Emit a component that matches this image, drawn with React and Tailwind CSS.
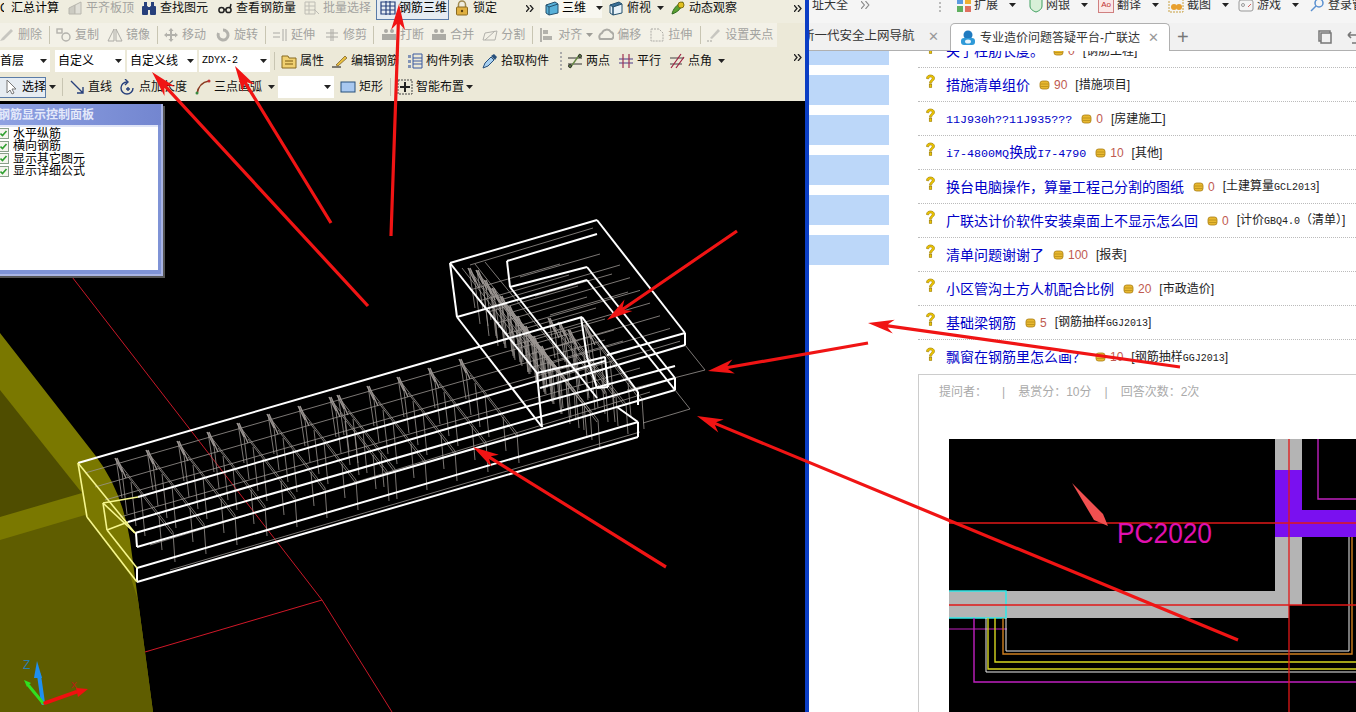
import React from 'react'

const Ic = ({ children, className = '' }) => (
  <svg viewBox="0 0 16 16" className={`w-4 h-4 shrink-0 ${className}`}>{children}</svg>
)
const Caret = ({ className = '' }) => (
  <svg viewBox="0 0 7 4" className={`w-[7px] h-[4px] shrink-0 ${className}`}><path d="M0 0h7L3.5 4z" fill="#222" /></svg>
)
const More = ({ className = '' }) => (
  <svg viewBox="0 0 8 7" className={`w-2 h-[7px] shrink-0 ${className}`}>
    <path d="M0 0l3 3.5L0 7M4 0l3 3.5L4 7" fill="none" stroke="#222" strokeWidth="1.3" />
  </svg>
)
const Sep = ({ className = '' }) => <span className={`w-px h-[18px] bg-[#c8c5b2] shrink-0 ${className}`} />

const Tool = ({ icon, label, off, className = '' }) => (
  <div className={`flex items-center gap-[3px] shrink-0 ${off ? 'text-[#a3a3a0]' : 'text-[#111]'} ${className}`}>
    <Ic className={off ? 'opacity-40' : ''}>{icon}</Ic>
    <span>{label}</span>
  </div>
)

const Combo = ({ label, className = '', mono }) => (
  <div className={`flex items-center justify-between bg-white h-[22px] pl-[3px] pr-[3px] shrink-0 ${className}`}>
    <span className={mono ? "font-['Liberation_Mono',monospace] text-[10px]" : ''}>{label}</span>
    <Caret />
  </div>
)

// toolbar glyphs
const g = {
  sum: <g fill="#999" stroke="#666"><path d="M2 14V8l6-3v9z" /><path d="M8 14V5l6-3v12z" fill="#ccc" /></g>,
  binoc: <g fill="#27407c"><rect x="1" y="6" width="6" height="9" rx="1" /><rect x="9" y="6" width="6" height="9" rx="1" /><rect x="3" y="2" width="3" height="5" /><rect x="10" y="2" width="3" height="5" /><rect x="6" y="7" width="4" height="3" /></g>,
  glasses: <g fill="none" stroke="#222" strokeWidth="1.5"><circle cx="4.5" cy="10" r="2.6" /><circle cx="11.5" cy="10" r="2.6" /><path d="M7 9.5h2M13 8l1-4" /></g>,
  batch: <g fill="none" stroke="#777"><path d="M1 2h10v12H1zM1 6h10M1 10h10M5 2v12" /><path d="M10 9l5 5" /></g>,
  rebar3d: <g fill="none" stroke="#27407c" strokeWidth="1.2"><path d="M1 2h14v12H1zM1 6h14M1 10h14M6 1v14M10 1v14" /></g>,
  lock: <g><path d="M4.5 7V4.5a3.5 3.5 0 017 0V7" fill="none" stroke="#a08a50" strokeWidth="1.5" /><rect x="2.5" y="7" width="11" height="8" rx="1" fill="#e0b040" stroke="#8a6a20" /><circle cx="8" cy="11" r="1.2" fill="#5a4010" /></g>,
  cube: <g stroke="#24506e"><path d="M2 5l9-3 3 2v9l-9 2-3-2z" fill="#58b0d8" /><path d="M2 5l3 2 9-3M5 7v8" fill="none" /></g>,
  cube2: <g stroke="#24506e"><path d="M2 5l9-3 3 2-9 3z" fill="#3a7098" /><path d="M2 5l3 2v8l-3-2zM5 7l9-3v9l-9 2z" fill="#e8f2f8" /></g>,
  orbit: <g><path d="M2 14c1-5 5-10 11-12-1 6-5 10-11 12z" fill="#5aa030" stroke="#2f6a20" /><circle cx="11" cy="5" r="3" fill="#e0c020" stroke="#807010" /></g>,
  brush: <path d="M1 14l4-1 9-9-2-2-9 9z" fill="#888" />,
  copy: <g fill="none" stroke="#555" strokeWidth="1.4"><rect x="1" y="2" width="5" height="4" /><circle cx="10" cy="10" r="4" /></g>,
  mirror: <g fill="none" stroke="#444"><path d="M7 2L1 14h6zM9 2l6 12H9z" /></g>,
  move: <path d="M8 1l2.500 3H9v3h3V5.500l3 2.500-3 2.500V9H9v3h1.500L8 15l-2.500-3H7V9H4v1.500L1 8l3-2.500V7h3V4H5.500z" fill="#555" />,
  rotate: <path d="M8 3a5 5 0 11-4.500 3" fill="none" stroke="#555" strokeWidth="3" />,
  extend: <g stroke="#444" fill="none"><path d="M1 6h7M1 10h7M11 2v12M14 2v12" /></g>,
  trim: <g stroke="#444" fill="none"><path d="M2 6h12M2 10h12M7 2v12M9 2v12" /></g>,
  brk: <g fill="#444"><rect x="1" y="7" width="14" height="6" /><circle cx="5" cy="4" r="2" /><circle cx="11" cy="4" r="2" /></g>,
  split: <g stroke="#555" fill="none"><path d="M1 13h12L15 4 3 6z" /><path d="M3 13l10-9" /></g>,
  align: <g fill="#555"><rect x="1" y="1" width="2" height="14" /><rect x="4" y="3" width="5" height="4" /><rect x="4" y="9" width="9" height="4" /></g>,
  offset: <path d="M2 12a4 4 0 012-6 5 5 0 019-1 4 4 0 011 7z" fill="none" stroke="#444" strokeWidth="2" />,
  stretch: <g stroke="#444" fill="none" strokeDasharray="2 1"><path d="M2 2h8l4 4v8H2z" /></g>,
  grip: <g><path d="M1 14h6" stroke="#333" strokeDasharray="2 1" /><path d="M4 11l8-9 2 2-8 8z" fill="#888" /></g>,
  props: <g><path d="M1 3h6l1 2h7v10H1z" fill="#f0d070" stroke="#886a20" /><path d="M4 11h8M4 8h8" stroke="#7a5a10" /></g>,
  edit: <g><path d="M0 14h9" stroke="#111" /><path d="M4 12L13 3l2 2-9 8z" fill="#e8c040" stroke="#604010" strokeWidth=".6" /></g>,
  list: <g fill="#3a5aa0"><path d="M1 2h3v3H1zM1 7h3v3H1zM1 12h3v3H1z" opacity=".6" /><path d="M6 1h9v14H6z" fill="none" stroke="#3a5aa0" /><path d="M6 5h9M6 8h9M6 11h9" stroke="#3a5aa0" /></g>,
  pick: <g><path d="M1 15l2-5 6-6 3 3-6 6z" fill="#a8d0f0" stroke="#27507c" /><path d="M9 3l3-2 3 3-2 3z" fill="#27507c" /></g>,
  twoPt: <g stroke="#333"><path d="M1 5h14M1 11h14" /><path d="M3 15L13 1" stroke="#684" strokeWidth="1.4" /><circle cx="13" cy="3" r="1.500" fill="#684" /><circle cx="3" cy="13" r="1.500" fill="#684" /></g>,
  parallel: <g stroke="#4a3a88" strokeWidth="1.2"><path d="M1 6h14M1 10h14" /><path d="M5 1v14M11 1v14" stroke="#a03050" /></g>,
  angle: <g stroke="#a02040" strokeWidth="1.2"><path d="M1 5h14M1 11h12" stroke="#444" /><path d="M2 15L12 1M7 15L15 4" /></g>,
  cursor: <path d="M4 1v13l3-3 2 4 2-1-2-4h4z" fill="#fff" stroke="#777" />,
  line: <g stroke="#27407c" strokeWidth="1.4"><path d="M2 2l12 12M14 8v6H8" fill="none" /></g>,
  lengthen: <g fill="none" stroke="#27407c" strokeWidth="1.4"><path d="M7 3a6 6 0 106 6" /><path d="M5 0l3 3-3 3" /><path d="M8 8v4M6 10h4" /></g>,
  arc: <g><path d="M2 15C3 8 7 3 14 2" fill="none" stroke="#8a3a20" strokeWidth="1.6" /><circle cx="2" cy="14" r="1.500" fill="#3a8a40" /><circle cx="14" cy="2" r="1.500" fill="#c03030" /></g>,
  rect: <rect x="1" y="3" width="14" height="10" fill="#a8c8f0" stroke="#27507c" />,
  smart: <g fill="#222"><path d="M1 1h14v14H1z" fill="none" stroke="#444" strokeDasharray="2 1" /><path d="M7 3h2v10H7zM3 7h10v2H3z" /></g>,
}

const mono12 = "font-['Liberation_Mono',monospace] text-[11.7px]"
const mono10 = "font-['Liberation_Mono',monospace] text-[10px]"

const rows = [
  ['关于柱筋长度。', '0', '[钢筋工程]'],
  ['措施清单组价', '90', '[措施项目]'],
  [<span className={mono12}>11J930h??11J935???</span>, '0', '[房建施工]'],
  [<><span className={mono12}>i7-4800MQ</span>换成<span className={mono12}>I7-4790</span></>, '10', '[其他]'],
  ['换台电脑操作，算量工程己分割的图纸', '0', <>[土建算量<span className={mono10}>GCL2013</span>]</>],
  ['广联达计价软件安装桌面上不显示怎么回', '0', <>[计价<span className={mono10}>GBQ4.0</span>（清单）]</>],
  ['清单问题谢谢了', '100', '[报表]'],
  ['小区管沟土方人机配合比例', '20', '[市政造价]'],
  ['基础梁钢筋', '5', <>[钢筋抽样<span className={mono10}>GGJ2013</span>]</>],
  ['飘窗在钢筋里怎么画？', '10', <>[钢筋抽样<span className={mono10}>GGJ2013</span>]</>],
]

const Question = () => (
  <svg viewBox="0 0 11 15" className="w-[11px] h-[15px] shrink-0 -mt-[6px]">
    <path d="M1.500 4.500C1.500 2 3.500 1 5.500 1s4 1.200 4 3.300c0 2.400-3 2.700-3 5H4.500c0-3.200 2.700-3.300 2.700-5 0-.9-.7-1.300-1.700-1.300S3.800 3.600 3.700 4.800z" fill="#f0c800" stroke="#a08000" strokeWidth=".7" />
    <rect x="4.300" y="10.500" width="2.400" height="2.800" fill="#f0c800" stroke="#a08000" strokeWidth=".7" />
  </svg>
)
const Coin = () => (
  <svg viewBox="0 0 11 10" className="w-[11px] h-[10px] shrink-0 ml-[9px]">
    <rect x="1" y="1" width="9" height="8" rx="2.500" fill="#e8b830" stroke="#a87c10" strokeWidth=".8" />
    <path d="M1.500 4h8M1.500 6.500h8" stroke="#b08818" strokeWidth=".7" />
  </svg>
)

// wireframe geometry, in page coordinates
const white = [
  [138, 497, 460, 404], [460, 404, 605, 361], [137, 547, 675, 390], [135, 533, 675, 378], [128, 522, 460, 425], [460, 425, 675, 366],
  [137, 568, 638, 422], [137, 582, 638, 437], [136, 533, 137, 547], [137, 568, 137, 582], [638, 422, 638, 437], [617, 407, 638, 422],
  [78, 463, 582, 317], [582, 317, 638, 392], [638, 392, 638, 405], [450, 263, 597, 220], [597, 220, 685, 333], [685, 333, 685, 345],
  [450, 263, 457, 317], [457, 317, 587, 280], [507, 261, 597, 234], [507, 261, 510, 287], [510, 287, 587, 267], [587, 267, 675, 378],
  [587, 280, 675, 390], [675, 378, 675, 390], [450, 263, 537, 373], [537, 373, 542, 427], [457, 317, 542, 427], [537, 373, 605, 357], [605, 357, 608, 387],
  [685, 345, 540, 388], [685, 333, 607, 355], [510, 287, 597, 398], [597, 388, 608, 387], [581, 317, 587, 357], [587, 357, 597, 388],
]
const pale = [
  [78, 463, 135, 533], [78, 463, 87, 517], [87, 517, 137, 582], [103, 503, 107, 530], [107, 530, 137, 568], [103, 503, 135, 533], [107, 530, 128, 522], [103, 503, 138, 497],
]
const stirrupTips = [[115, 458], [146, 450], [177, 441], [207, 432], [237, 423], [267, 414], [298, 406], [329, 397], [337, 395], [367, 386], [397, 377], [428, 368], [459, 359]]
const slabTips = [[468, 268], [476, 270], [484, 280], [492, 288], [500, 296], [508, 306], [516, 316], [524, 326], [532, 336], [540, 346], [548, 318], [558, 322], [568, 330], [584, 325]]

const Stirrup = ({ x, y }) => (
  <g>
    <path d={`M${x} ${y}l7 14M${x + 2} ${y}l9 20`} strokeWidth="1.300" />
    <path d={`M${x} ${y}l58 74M${x + 11} ${y + 16}l46 60M${x + 1} ${y}l6 40M${x + 7} ${y + 14}l5 42M${x + 16} ${y + 24}l5 44M${x + 26} ${y + 36}l4 42M${x + 44} ${y + 58}l3 34M${x + 58} ${y + 74}l2 30`} />
  </g>
)

const Wireframe = () => (
  <svg viewBox="0 101 805 611" className="w-full h-full block">
    <path d="M0 333L95 455Q122 490 130 540L138 600L153 712H0z" fill="#7a7800" />
    <path d="M0 540L85 515L130 575L138 600L153 712H0z" fill="#5f5d00" />
    <path d="M0 390L82 493L0 517z" fill="#4f4d00" />
    <path d="M69 273L322 600L392 712" fill="none" stroke="#c81828" />
    <path d="M145 652L322 600" fill="none" stroke="#d01828" />

    <g stroke="#9b9592" strokeWidth=".8" fill="none">
      {stirrupTips.map(([x, y]) => <Stirrup key={x} x={x} y={y} />)}
      {slabTips.map(([x, y]) => <Stirrup key={x} x={x} y={y} />)}
      <path d="M85 473L582 330M95 487L605 340M105 500L620 352M120 517L640 368M150 545L650 392M170 570L640 432" />
      {[0, 1, 2, 3, 4, 5, 6].map((t) => (
        <path key={t} d={`M${500 + t * 10} ${300 + t * 12.7}l120 -35`} />
      ))}
      {[0, 1, 2, 3, 4, 5, 6, 7].map((t) => (
        <path key={t} d={`M${470 + t * 9} ${290 + t * 11}l90 -26`} />
      ))}
      <path d="M470 265L593 228M520 277L600 254M535 296L612 274M550 315L628 292" />
      <path d="M685 345L705 370L627 390M675 390L690 409L643 423" />
      <path d="M462 268L548 378M475 264L560 372M485 262L575 372" />
    </g>

    <g stroke="#fff" strokeWidth="2" fill="none">
      {white.map(([a, b, c, d], i) => <line key={i} x1={a} y1={b} x2={c} y2={d} />)}
    </g>
    <g stroke="#f6f68c" strokeWidth="1.600" fill="none">
      {pale.map(([a, b, c, d], i) => <line key={i} x1={a} y1={b} x2={c} y2={d} />)}
    </g>

    <g strokeLinecap="round">
      <path d="M43 703L39 675" stroke="#1f8ff0" strokeWidth="4" />
      <path d="M37 661l5 17h-8z" fill="#1f8ff0" />
      <path d="M43 703L29 686" stroke="#30e020" strokeWidth="3" />
      <path d="M24 680l7 3-4 4z" fill="#30e020" />
      <path d="M45 703L76 692" stroke="#f01010" strokeWidth="3.500" />
      <path d="M88 689l-10 8-2-9z" fill="#f01010" />
    </g>
    <text x="23" y="669" fontSize="12" fill="#2a7fb0" fontFamily="Liberation Sans">Z</text>
    <text x="71" y="688" fontSize="9" fill="#c01818" fontFamily="Liberation Sans">X</text>
  </svg>
)

const DrawingPhoto = () => (
  <svg viewBox="949 439 407 273" className="w-[407px] h-[273px] ml-[30px] block bg-black shrink-0">
    <path d="M1275 439h27v166h-27zM949 591h340v27H949z" fill="#b4b4b4" />
    <path d="M1275 470h27v40h54v27h-81z" fill="#7a10f0" />
    <g fill="none">
      <path d="M949 591h57v27h-57" stroke="#30e8e8" strokeWidth="1.500" />
      <path d="M949 629h58" stroke="#c020c0" />
      <path d="M974 618v64h382" stroke="#c020c0" strokeWidth="1.400" />
      <path d="M986 618v54h370" stroke="#eee" />
      <path d="M988 618v51h368" stroke="#d8d820" strokeWidth="1.400" />
      <path d="M995 618v44h361" stroke="#d8d820" strokeWidth="1.400" />
      <path d="M1003 618v36h349v-117" stroke="#d08020" strokeWidth="1.400" />
      <path d="M1006 618v33h343v-114" stroke="#eee" />
      <path d="M1318 439v60h38" stroke="#c020c0" strokeWidth="1.400" />
      <path d="M949 523h407M949 605h407M1289 439v273" stroke="#e01818" strokeWidth="1.300" />
    </g>
    <path d="M1072 483l31 31 5 12-14-6z" fill="#f05050" />
    <text x="1117" y="543" fontSize="29" fill="#e010b0" fontFamily="Liberation Sans" textLength="95" lengthAdjust="spacingAndGlyphs">PC2020</text>
  </svg>
)

const head = (x1, y1, x2, y2, w = 3.200, len = 26, hw = 7) => {
  const a = Math.atan2(y2 - y1, x2 - x1)
  const c = Math.cos(a), s = Math.sin(a)
  const p = (d, n) => `${(x2 - c * d - s * n).toFixed(1)},${(y2 - s * d + c * n).toFixed(1)}`
  return `${(x1 - s * w / 2).toFixed(1)},${(y1 + c * w / 2).toFixed(1)} ${p(len - 6, w / 2)} ${p(len, hw)} ${x2},${y2} ${p(len, -hw)} ${p(len - 6, -w / 2)} ${(x1 + s * w / 2).toFixed(1)},${(y1 - c * w / 2).toFixed(1)}`
}

const arrows = [
  [368, 306, 152, 72], [331, 223, 235, 66], [391, 236, 399, 4], [737, 231, 607, 320],
  [868, 343, 708, 371], [1180, 367, 868, 323], [1238, 640, 697, 416], [666, 567, 473, 447],
]

export default function App() {
  return (
    <div className="relative flex w-[1356px] h-[712px] overflow-hidden bg-white text-[12px] leading-none whitespace-nowrap font-['Liberation_Sans','Noto_Sans_CJK_SC',sans-serif]">

      {/* CAD window */}
      <div className="w-[805px] h-full flex flex-col bg-[#ece9d8] shrink-0 overflow-hidden">
        <div className="h-[23px] flex items-center pb-[7px] shrink-0 bg-[#efeddf]">
          <span className="w-[4px] overflow-hidden shrink-0">C</span>
          <span className="ml-[7px] shrink-0">汇总计算</span>
          <Tool off icon={g.sum} label="平齐板顶" className="ml-[8px]" />
          <Tool icon={g.binoc} label="查找图元" className="ml-[7px]" />
          <Tool icon={g.glasses} label="查看钢筋量" className="ml-[9px]" />
          <Tool off icon={g.batch} label="批量选择" className="ml-[8px]" />
          <div className="ml-[5px] w-[73px] h-[24px] flex items-center gap-[3px] pl-[3px] border border-[#5a7ca8] bg-[#e6ecf2] shrink-0">
            <Ic>{g.rebar3d}</Ic><span>钢筋三维</span>
          </div>
          <Tool icon={g.lock} label="锁定" className="ml-[5px]" />
          <More className="ml-[29px]" />
          <div className="ml-[6px] w-[62px] h-[20px] flex items-center gap-[2px] pl-[4px] bg-[#f8f7f0] shrink-0">
            <Ic>{g.cube}</Ic><span className="shrink-0">三维</span><Caret className="ml-[8px]" />
          </div>
          <Tool icon={g.cube2} label="俯视" className="ml-[6px]" />
          <Caret className="ml-[6px]" />
          <Tool icon={g.orbit} label="动态观察" className="ml-[6px]" />
          <More className="ml-auto mr-[3px]" />
        </div>

        <div className="h-[26px] flex items-center pb-[2px] shrink-0">
          <div className="h-[24px] w-[777px] flex items-center bg-[#f3f1e7] shrink-0">
            <Tool off icon={g.brush} label="删除" className="-ml-[1px]" />
            <Sep className="ml-[7px]" />
            <Tool off icon={g.copy} label="复制" className="ml-[6px]" />
            <Tool off icon={g.mirror} label="镜像" className="ml-[8px]" />
            <Sep className="ml-[7px]" />
            <Tool off icon={g.move} label="移动" className="ml-[5px]" />
            <Tool off icon={g.rotate} label="旋转" className="ml-[9px]" />
            <Sep className="ml-[7px]" />
            <Tool off icon={g.extend} label="延伸" className="ml-[6px]" />
            <Tool off icon={g.trim} label="修剪" className="ml-[9px]" />
            <Sep className="ml-[6px]" />
            <Tool off icon={g.brk} label="打断" className="ml-[7px]" />
            <Tool off icon={g.brk} label="合并" className="ml-[7px]" />
            <Tool off icon={g.split} label="分割" className="ml-[8px]" />
            <Sep className="ml-[7px]" />
            <Tool off icon={g.align} label="对齐" className="ml-[6px]" />
            <Caret className="ml-[4px] opacity-40" />
            <Tool off icon={g.offset} label="偏移" className="ml-[5px]" />
            <Tool off icon={g.stretch} label="拉伸" className="ml-[8px]" />
            <Sep className="ml-[8px]" />
            <Tool off icon={g.grip} label="设置夹点" className="ml-[5px]" />
          </div>
        </div>

        <div className="h-[26px] flex items-center pb-[2px] shrink-0">
          <Combo label="首层" className="w-[50px] !pl-0" />
          <Combo label="自定义" className="w-[70px] ml-[5px]" />
          <Combo label="自定义线" className="w-[70px] ml-[2px]" />
          <Combo label="ZDYX-2" mono className="w-[71px] ml-[2px]" />
          <Sep className="ml-[4px]" />
          <Tool icon={g.props} label="属性" className="ml-[6px]" />
          <Tool icon={g.edit} label="编辑钢筋" className="ml-[8px]" />
          <Tool icon={g.list} label="构件列表" className="ml-[8px]" />
          <Tool icon={g.pick} label="拾取构件" className="ml-[8px]" />
          <span className="ml-[11px] w-[2px] h-[18px] shrink-0 border-l-2 border-dotted border-[#aaa]" />
          <Tool icon={g.twoPt} label="两点" className="ml-[5px]" />
          <Tool icon={g.parallel} label="平行" className="ml-[8px]" />
          <Tool icon={g.angle} label="点角" className="ml-[8px]" />
          <Caret className="ml-[6px]" />
          <More className="ml-auto mr-[3px] -mt-[8px]" />
        </div>

        <div className="h-[26px] flex items-center pb-[2px] shrink-0">
          <div className="-ml-[1px] w-[47px] h-[21px] flex items-center gap-[3px] pl-[3px] border border-[#5a7ca8] bg-[#e6ecf2] shrink-0">
            <Ic>{g.cursor}</Ic><span className="shrink-0">选择</span>
          </div>
          <Caret className="ml-[3px]" />
          <Sep className="ml-[6px]" />
          <Tool icon={g.line} label="直线" className="ml-[6px]" />
          <Tool icon={g.lengthen} label="点加长度" className="ml-[8px]" />
          <Tool icon={g.arc} label="三点画弧" className="ml-[8px]" />
          <Caret className="ml-[6px]" />
          <div className="ml-[3px] w-[56px] h-[22px] bg-white flex items-center justify-end pr-[3px] shrink-0"><Caret /></div>
          <Tool icon={g.rect} label="矩形" className="ml-[6px]" />
          <Sep className="ml-[7px]" />
          <Tool icon={g.smart} label="智能布置" className="ml-[6px]" />
          <Caret className="ml-[2px]" />
        </div>

        <div className="relative flex-1 bg-black min-h-0">
          <Wireframe />
          <div className="absolute -left-[3px] top-[3px] w-[166px] h-[172px] flex flex-col bg-[#7f93d6] border-r-2 border-b-2 border-[#a9b4e4] shadow-[2px_2px_0_#555]">
            <div className="h-[21px] flex items-center px-[1px] bg-gradient-to-r from-[#8fa2e2] to-[#7386d0] text-[#e4e9fa] font-bold shrink-0">钢筋显示控制面板</div>
            <div className="flex-1 mr-[3px] mb-[4px] bg-white border-t-2 border-[#dfe4f6] flex flex-col gap-px pt-[1px] pl-[1px]">
              {['水平纵筋', '横向钢筋', '显示其它图元', '显示详细公式'].map((t) => (
                <div key={t} className="h-[11.500px] flex items-center gap-[4px]">
                  <svg viewBox="0 0 11 11" className="w-[11px] h-[11px] shrink-0">
                    <rect x=".5" y=".5" width="10" height="10" fill="#f4f4ee" stroke="#8aa08a" />
                    <path d="M2.500 5.500l2 2 4-4.500" fill="none" stroke="#2fa030" strokeWidth="1.600" />
                  </svg>
                  <span className="text-black">{t}</span>
                </div>
              ))}
            </div>
          </div>
        </div>
      </div>

      <div className="w-[4px] h-full bg-[#0b3ec4] shrink-0" />

      {/* browser window */}
      <div className="flex-1 min-w-0 h-full flex flex-col text-[#333]">
        <div className="h-[23px] flex items-center pb-[13px] bg-[#f5f5f5] shrink-0 overflow-hidden">
          <span className="ml-[3px] shrink-0">址大全</span>
          <svg viewBox="0 0 8 7" className="w-[9px] h-[8px] ml-[13px] shrink-0"><path d="M0 0l3 3.500L0 7M4 0l3 3.500L4 7" fill="none" stroke="#888" /></svg>
          <span className="ml-[69px] w-[3px] h-[14px] shrink-0 border-l-2 border-dotted border-[#bbb]" />
          <Ic className="ml-[14px]"><g><rect x="1" y="1" width="6" height="6" fill="#5a9ae0" /><rect x="9" y="1" width="6" height="6" fill="#f0b030" /><rect x="1" y="9" width="6" height="6" fill="#60b060" /><rect x="9" y="9" width="6" height="6" fill="#e07060" /></g></Ic>
          <span className="ml-[2px] shrink-0">扩展</span>
          <Caret className="ml-[11px]" />
          <Ic className="ml-[12px]"><path d="M2 2l6-1 6 1v7c0 3-3 5-6 6-3-1-6-3-6-6z" fill="#d8f0d8" stroke="#40a060" /></Ic>
          <span className="ml-[2px] shrink-0">网银</span>
          <Caret className="ml-[11px]" />
          <div className="ml-[10px] w-4 h-4 border border-[#d08080] bg-[#fbe8e8] text-[8px] text-[#c03030] flex items-center justify-center shrink-0">Ao</div>
          <span className="ml-[3px] shrink-0">翻译</span>
          <Caret className="ml-[11px]" />
          <Ic className="ml-[9px]"><g fill="#e8a030"><rect x="1" y="1" width="14" height="14" fill="none" stroke="#c8a040" strokeDasharray="2 1" /><circle cx="6" cy="10" r="3" /><circle cx="11" cy="10" r="3" /></g></Ic>
          <span className="ml-[3px] shrink-0">截图</span>
          <Caret className="ml-[11px]" />
          <Ic className="ml-[9px]"><g fill="none" stroke="#999"><rect x="1" y="3" width="14" height="11" rx="2" /><circle cx="5" cy="8" r="1.500" /><path d="M10 10l3-3" stroke="#d06060" /></g></Ic>
          <span className="ml-[3px] shrink-0">游戏</span>
          <Caret className="ml-[11px]" />
          <Ic className="ml-[10px]"><g fill="none" stroke="#5a90d0" strokeWidth="1.500"><circle cx="10" cy="6" r="4" /><path d="M7 9l-5 5" /></g></Ic>
          <span className="ml-[3px] shrink-0">登录管</span>
        </div>

        <div className="h-[28px] flex items-end bg-[#f1f1f1] border-b border-[#b0b0b0] shrink-0">
          <div className="h-[27px] flex items-center overflow-hidden w-[138px] shrink-0">
            <span className="-ml-[7px] text-[12.500px] shrink-0">新一代安全上网导航</span>
            <span className="ml-[13px] text-[13px] text-[#999]">✕</span>
          </div>
          <div className="ml-[3px] -mb-px w-[220px] h-[28px] flex items-center bg-white border border-b-0 border-[#b0b0b0] rounded-t-[5px] shrink-0">
            <svg viewBox="0 0 16 16" className="w-4 h-4 ml-[9px] shrink-0">
              <circle cx="8" cy="5" r="4.500" fill="#1f7ac0" />
              <rect x="1" y="8" width="14" height="7" rx="3" fill="#2f9ad8" />
              <ellipse cx="8" cy="11.500" rx="3" ry="2" fill="#e8f4fc" />
            </svg>
            <span className="ml-[4px] w-[165px] text-[12px] shrink-0">专业造价问题答疑平台-广联达</span>
            <span className="ml-[3px] text-[13px] text-[#999]">✕</span>
          </div>
          <span className="ml-[7px] h-[27px] flex items-center text-[20px] text-[#777]">+</span>
          <div className="ml-auto h-[27px] flex items-center gap-[13px] -mr-[6px]">
            <Ic><g fill="none" stroke="#777" strokeWidth="1.500"><path d="M4 12H2V2h11v2" /><path d="M4 4h10v10H4z" /></g></Ic>
            <Ic><path d="M2 6h8a4 4 0 010 8H6M2 6l3-3M2 6l3 3" fill="none" stroke="#777" strokeWidth="1.600" /></Ic>
          </div>
        </div>

        <div className="flex-1 min-h-0 flex overflow-hidden">
          <div className="w-[80px] flex flex-col gap-[10px] shrink-0">
            <div className="h-[14px] bg-[#bcd7f9]" />
            <div className="h-[30px] bg-[#bcd7f9]" />
            <div className="h-[30px] bg-[#bcd7f9]" />
            <div className="h-[30px] bg-[#bcd7f9]" />
            <div className="h-[30px] bg-[#bcd7f9]" />
            <div className="h-[30px] bg-[#bcd7f9]" />
          </div>
          <div className="ml-[29px] flex-1 min-w-0 flex flex-col">
            <div className="-mt-[17px] shrink-0">
              {rows.map(([title, score, tag], i) => (
                <div key={i} className={`h-[34px] flex items-center pl-[7px] ${i < 9 ? 'border-b border-dotted border-[#bbb]' : ''}`}>
                  <Question />
                  <span className="ml-[10px] text-[14px] text-[#0000c8]">{title}</span>
                  <Coin />
                  <span className="ml-[4px] text-[#c05a50]">{score}</span>
                  <span className="ml-[8px] text-[#222]">{tag}</span>
                </div>
              ))}
            </div>
            <div className="flex-1 min-h-0 border-t border-l border-[#ccc] flex flex-col overflow-hidden">
              <div className="h-[64px] flex items-start pt-[11px] pl-[20px] text-[#aaa] shrink-0">
                <span>提问者：</span>
                <span className="ml-[15px]">|</span>
                <span className="ml-[13px]">悬赏分：10分</span>
                <span className="ml-[13px]">|</span>
                <span className="ml-[13px]">回答次数：2次</span>
              </div>
              <DrawingPhoto />
            </div>
          </div>
        </div>
      </div>

      {/* annotation arrows drawn over the whole screenshot */}
      <svg viewBox="0 0 1356 712" className="absolute inset-0 w-[1356px] h-[712px] pointer-events-none">
        {arrows.map(([a, b, c, d], i) => <polygon key={i} points={head(a, b, c, d)} fill="#f01414" />)}
      </svg>
    </div>
  )
}
